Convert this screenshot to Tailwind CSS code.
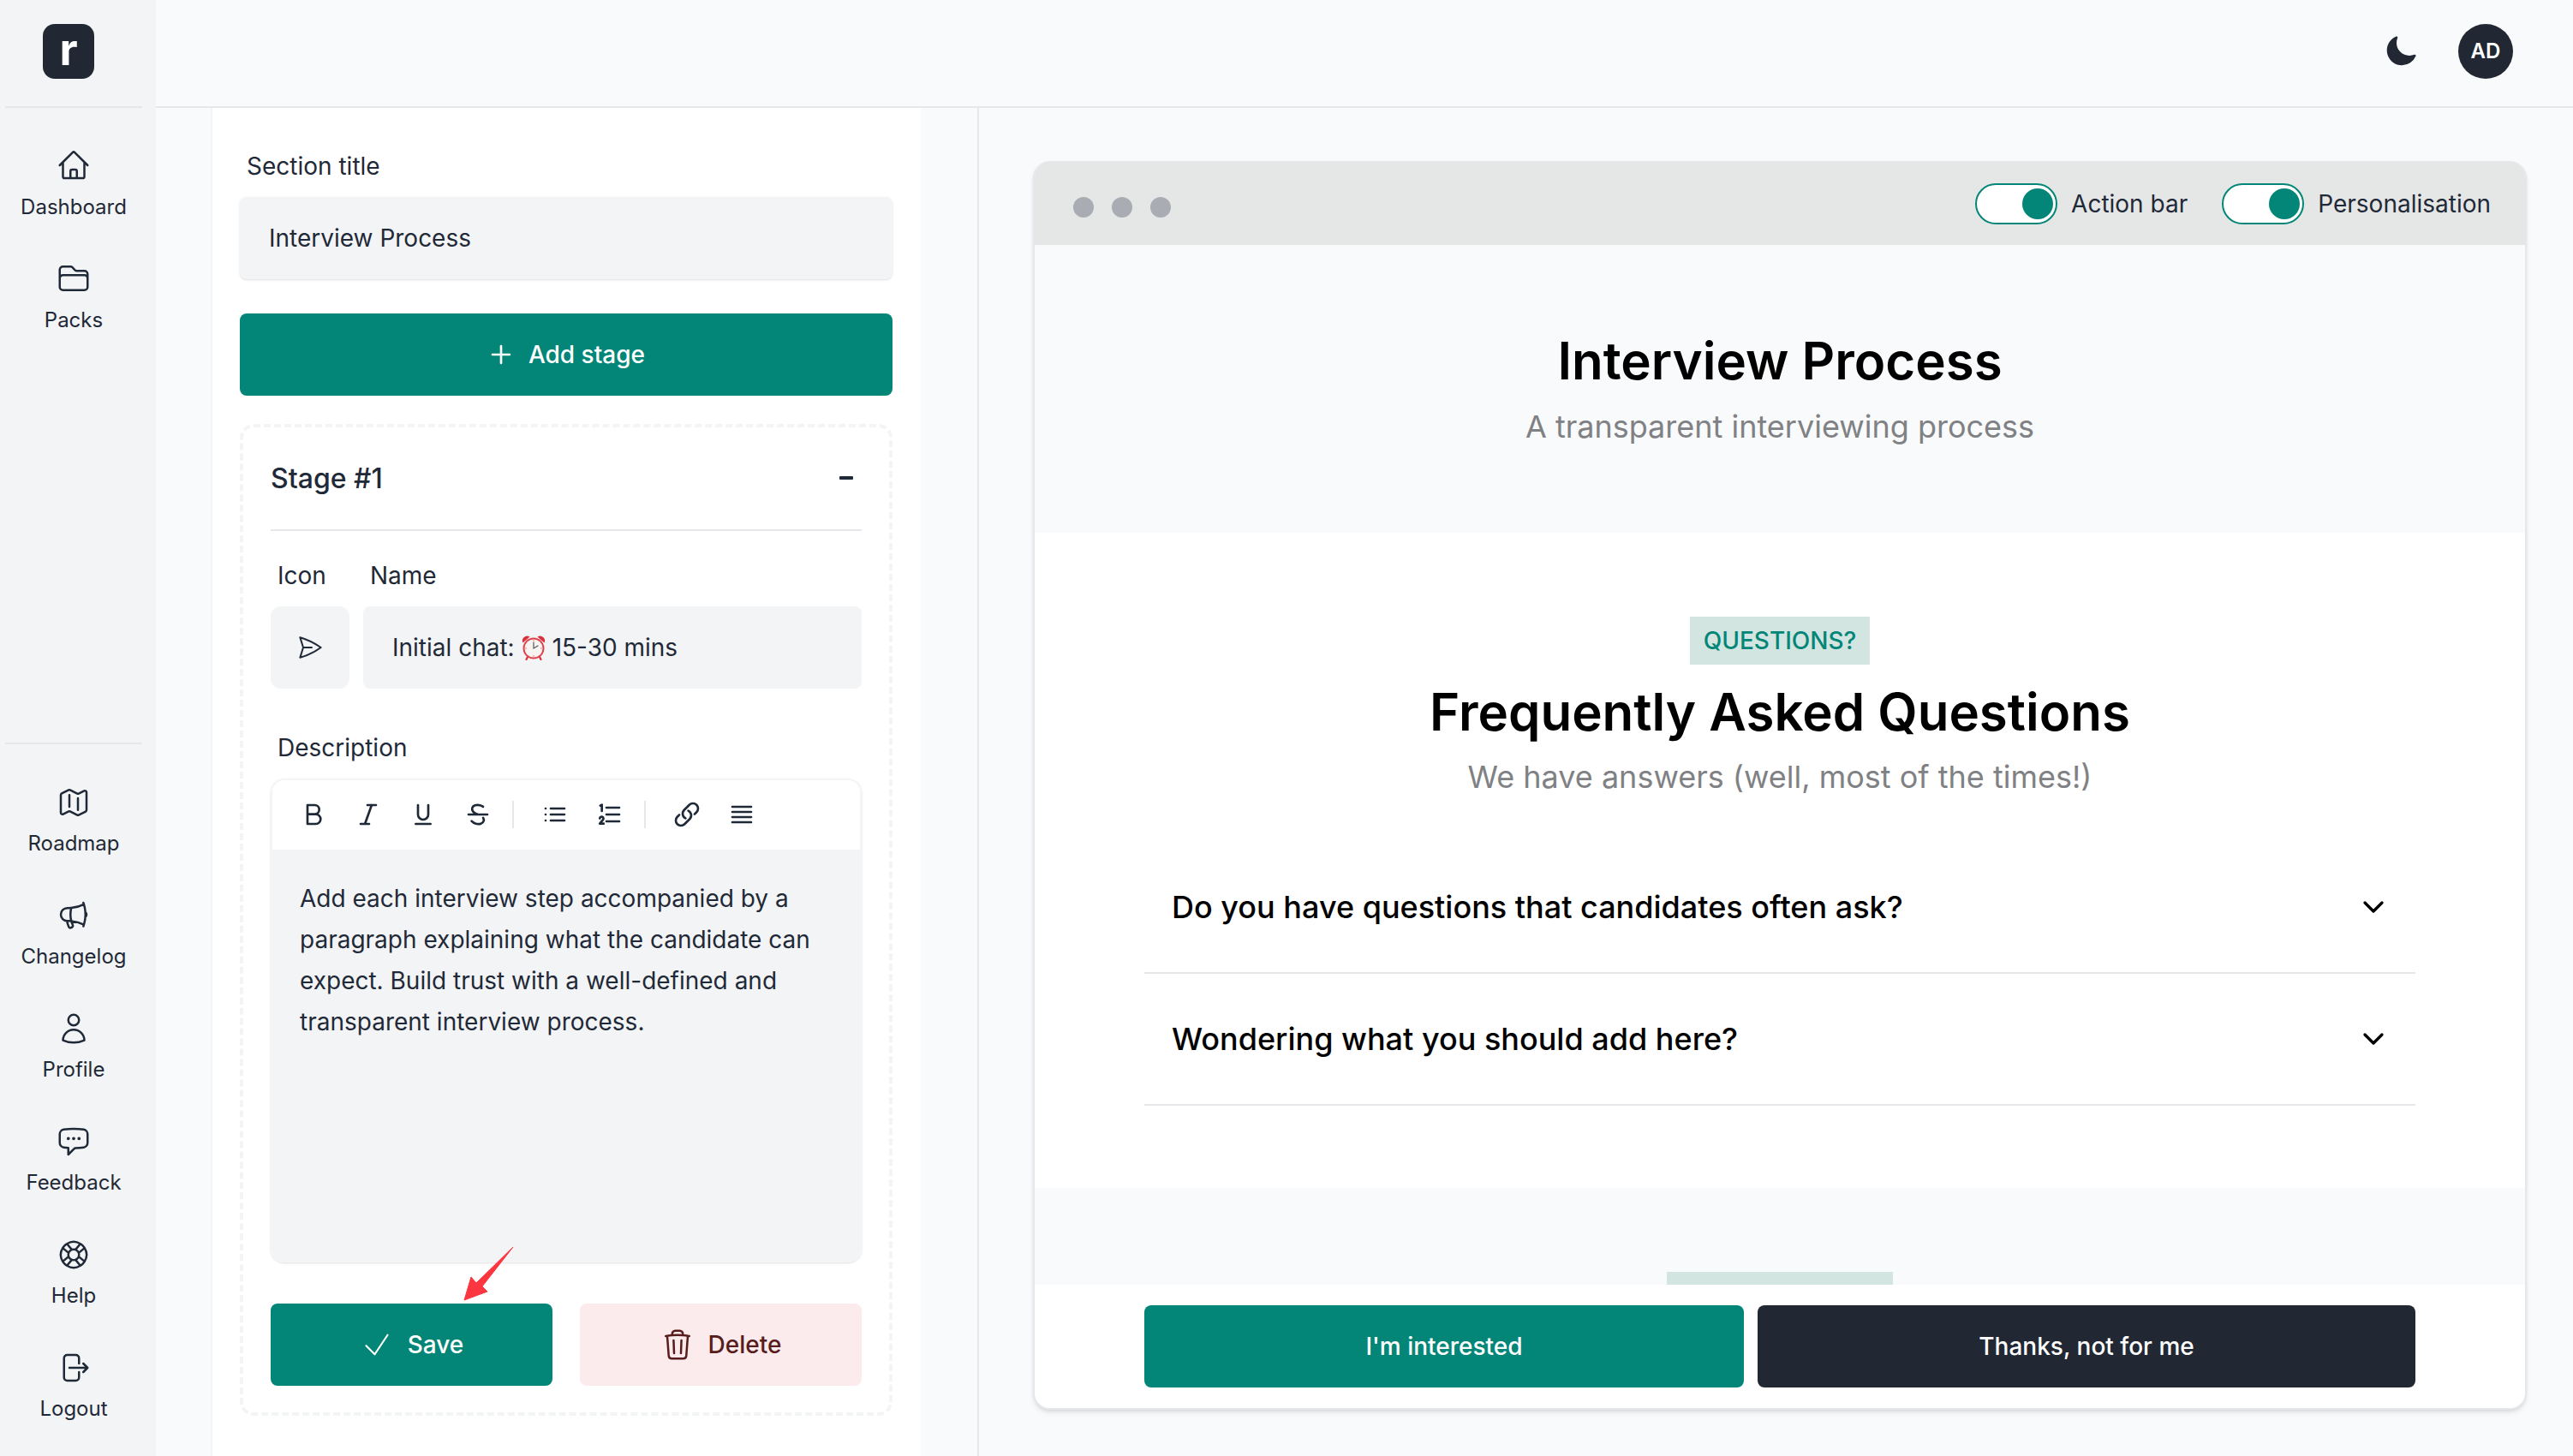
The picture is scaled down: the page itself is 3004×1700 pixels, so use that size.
<!DOCTYPE html>
<html lang="en">
<head>
<meta charset="utf-8">
<title>Interview Process</title>
<script src="https://cdn.jsdelivr.net/npm/@tailwindcss/browser@4"></script>
</head>
<body class="m-0">
<div class="flex w-[3004px] h-[1700px] overflow-hidden bg-[#f9fafb] text-[#1f2937] font-[Inter,sans-serif]">

  <!-- Sidebar -->
  <aside class="w-[182px] h-full shrink-0 flex flex-col bg-[#f3f4f6] pr-[10px] pb-[39px]">
    <div class="h-[124px] pl-[50px] pt-[28px] shrink-0">
      <div class="w-[60px] h-[64px] rounded-[14px] bg-[#212833] flex items-center justify-center text-white font-bold text-[52px] leading-none pb-[5px]">r</div>
    </div>
    <div class="mx-[6px] h-[2px] bg-[#e5e7eb] shrink-0"></div>
    <nav class="flex flex-col gap-[47px] pt-[47px]">
      <a class="flex flex-col items-center gap-[13px]">
        <svg class="w-[40px] h-[40px]" fill="none" viewBox="0 0 24 24" stroke="currentColor" stroke-width="1.5" stroke-linecap="round" stroke-linejoin="round"><path d="M2.25 12l8.954-8.955c.44-.439 1.152-.439 1.591 0L21.75 12M4.5 9.75v10.125c0 .621.504 1.125 1.125 1.125H9.75v-4.875c0-.621.504-1.125 1.125-1.125h2.25c.621 0 1.125.504 1.125 1.125V21h4.125c.621 0 1.125-.504 1.125-1.125V9.75M8.25 21h8.25"/></svg>
        <span class="text-[24px] leading-[32px]">Dashboard</span>
      </a>
      <a class="flex flex-col items-center gap-[13px]">
        <svg class="w-[40px] h-[40px]" fill="none" viewBox="0 0 24 24" stroke="currentColor" stroke-width="1.5" stroke-linecap="round" stroke-linejoin="round"><path d="M2.25 12.75V12A2.25 2.25 0 014.5 9.75h15A2.25 2.25 0 0121.75 12v.75m-8.69-6.44l-2.12-2.12a1.5 1.5 0 00-1.061-.44H4.5A2.25 2.25 0 002.25 6v12a2.25 2.25 0 002.25 2.25h15A2.25 2.25 0 0021.75 18V9a2.25 2.25 0 00-2.25-2.25h-5.379a1.5 1.5 0 01-1.06-.44z"/></svg>
        <span class="text-[24px] leading-[32px]">Packs</span>
      </a>
    </nav>
    <div class="mt-auto mx-[6px] h-[2px] bg-[#e5e7eb] shrink-0"></div>
    <nav class="flex flex-col gap-[48px] pt-[48px]">
      <a class="flex flex-col items-center gap-[12px]">
        <svg class="w-[40px] h-[40px]" fill="none" viewBox="0 0 24 24" stroke="currentColor" stroke-width="1.5" stroke-linecap="round" stroke-linejoin="round"><path d="M9 6.75V15m6-6v8.25m.503 3.498l4.875-2.437c.381-.19.622-.58.622-1.006V4.82c0-.836-.88-1.38-1.628-1.006l-3.869 1.934c-.317.159-.69.159-1.006 0L9.503 3.252a1.125 1.125 0 00-1.006 0L3.622 5.689C3.24 5.88 3 6.27 3 6.695V19.18c0 .836.88 1.38 1.628 1.006l3.869-1.934c.317-.159.69-.159 1.006 0l4.994 2.497c.317.158.69.158 1.006 0z"/></svg>
        <span class="text-[24px] leading-[32px]">Roadmap</span>
      </a>
      <a class="flex flex-col items-center gap-[12px]">
        <svg class="w-[40px] h-[40px]" fill="none" viewBox="0 0 24 24" stroke="currentColor" stroke-width="1.5" stroke-linecap="round" stroke-linejoin="round"><path d="M10.34 15.84c-.688-.06-1.386-.09-2.09-.09H7.5a4.5 4.5 0 110-9h.75c.704 0 1.402-.03 2.09-.09m0 9.18c.253.962.584 1.892.985 2.783.247.55.06 1.21-.463 1.511l-.657.38c-.551.318-1.26.117-1.527-.461a20.845 20.845 0 01-1.44-4.282m3.102.069a18.03 18.03 0 01-.59-4.59c0-1.586.205-3.124.59-4.59m0 9.18a23.848 23.848 0 018.835 2.535M10.34 6.66a23.847 23.847 0 008.835-2.535m0 0A23.74 23.74 0 0018.795 3m.38 1.125a23.91 23.91 0 011.014 5.395m-1.014 8.855c-.118.38-.245.754-.38 1.125m.38-1.125a23.91 23.91 0 001.014-5.395m0-3.46c.495.413.811 1.035.811 1.73 0 .695-.316 1.317-.811 1.73m0-3.46a24.347 24.347 0 010 3.46"/></svg>
        <span class="text-[24px] leading-[32px]">Changelog</span>
      </a>
      <a class="flex flex-col items-center gap-[12px]">
        <svg class="w-[40px] h-[40px]" fill="none" viewBox="0 0 24 24" stroke="currentColor" stroke-width="1.5" stroke-linecap="round" stroke-linejoin="round"><path d="M15.75 6a3.75 3.75 0 11-7.5 0 3.75 3.75 0 017.5 0zM4.501 20.118a7.5 7.5 0 0114.998 0A17.933 17.933 0 0112 21.75c-2.676 0-5.216-.584-7.499-1.632z"/></svg>
        <span class="text-[24px] leading-[32px]">Profile</span>
      </a>
      <a class="flex flex-col items-center gap-[12px]">
        <svg class="w-[40px] h-[40px]" fill="none" viewBox="0 0 24 24" stroke="currentColor" stroke-width="1.5" stroke-linecap="round" stroke-linejoin="round"><path d="M8.625 9.75a.375.375 0 11-.75 0 .375.375 0 01.75 0zm0 0H8.25m4.125 0a.375.375 0 11-.75 0 .375.375 0 01.75 0zm0 0H12m4.125 0a.375.375 0 11-.75 0 .375.375 0 01.75 0zm0 0h-.375m-13.5 3.01c0 1.6 1.123 2.994 2.707 3.227 1.087.16 2.185.283 3.293.369V21l4.184-4.183a1.14 1.14 0 01.778-.332 48.294 48.294 0 005.83-.498c1.585-.233 2.708-1.626 2.708-3.228V6.741c0-1.602-1.123-2.995-2.707-3.228A48.394 48.394 0 0012 3c-2.392 0-4.744.175-7.043.513C3.373 3.746 2.25 5.14 2.25 6.741v6.018z"/></svg>
        <span class="text-[24px] leading-[32px]">Feedback</span>
      </a>
      <a class="flex flex-col items-center gap-[12px]">
        <svg class="w-[40px] h-[40px]" fill="none" viewBox="0 0 24 24" stroke="currentColor" stroke-width="1.5" stroke-linecap="round" stroke-linejoin="round"><path d="M16.712 4.33a9.027 9.027 0 011.652 1.306c.51.51.944 1.064 1.306 1.652M16.712 4.33l-3.448 4.138m3.448-4.138a9.014 9.014 0 00-9.424 0M19.67 7.288l-4.138 3.448m4.138-3.448a9.014 9.014 0 010 9.424m-4.138-5.976a3.736 3.736 0 00-.88-1.388 3.737 3.737 0 00-1.388-.88m2.268 2.268a3.765 3.765 0 010 2.528m-2.268-4.796a3.765 3.765 0 00-2.528 0m4.796 4.796c-.181.506-.475.982-.88 1.388a3.736 3.736 0 01-1.388.88m2.268-2.268l4.138 3.448m0 0a9.027 9.027 0 01-1.306 1.652c-.51.51-1.064.944-1.652 1.306m0 0l-3.448-4.138m3.448 4.138a9.014 9.014 0 01-9.424 0m5.976-4.138a3.765 3.765 0 01-2.528 0m0 0a3.736 3.736 0 01-1.388-.88 3.737 3.737 0 01-.88-1.388m2.268 2.268L7.288 19.67m0 0a9.024 9.024 0 01-1.652-1.306 9.027 9.027 0 01-1.306-1.652m0 0l4.138-3.448M4.33 16.712a9.014 9.014 0 010-9.424m4.138 5.976a3.765 3.765 0 010-2.528m0 0c.181-.506.475-.982.88-1.388a3.736 3.736 0 011.388-.88m-2.268 2.268L4.33 7.288m6.406 1.18L7.288 4.33m0 0a9.024 9.024 0 00-1.652 1.306A9.025 9.025 0 004.33 7.288"/></svg>
        <span class="text-[24px] leading-[32px]">Help</span>
      </a>
      <a class="flex flex-col items-center gap-[12px]">
        <svg class="w-[40px] h-[40px]" fill="none" viewBox="0 0 24 24" stroke="currentColor" stroke-width="1.5" stroke-linecap="round" stroke-linejoin="round"><path d="M15.75 9V5.25A2.25 2.25 0 0013.5 3h-6a2.25 2.25 0 00-2.25 2.25v13.5A2.25 2.25 0 007.5 21h6a2.25 2.25 0 002.25-2.25V15m3 0l3-3m0 0l-3-3m3 3H9"/></svg>
        <span class="text-[24px] leading-[32px]">Logout</span>
      </a>
    </nav>
  </aside>

  <div class="flex-1 min-w-0 flex flex-col">
    <!-- Top bar -->
    <header class="h-[126px] shrink-0 border-b-2 border-[#e5e7eb] flex items-center justify-end pr-[70px] pb-[4px] gap-[47px]">
      <svg class="w-[40px] h-[40px]" viewBox="0 0 24 24" fill="#212833"><path fill-rule="evenodd" d="M9.528 1.718a.75.75 0 01.162.819A8.97 8.97 0 009 6a9 9 0 009 9 8.97 8.97 0 003.463-.69.75.75 0 01.981.98 10.503 10.503 0 01-9.694 6.46c-5.799 0-10.5-4.701-10.5-10.5 0-4.368 2.667-8.112 6.46-9.694a.75.75 0 01.818.162z" clip-rule="evenodd"/></svg>
      <div class="w-[64px] h-[64px] rounded-full bg-[#212833] text-white text-[24px] font-semibold flex items-center justify-center">AD</div>
    </header>

    <div class="flex-1 min-h-0 flex">
      <div class="w-[64px] shrink-0"></div>

      <!-- Editor panel -->
      <section class="w-[829px] shrink-0 bg-white border-l-2 border-[#f3f4f6] pl-[32px] pr-[33px] pt-[48px]">
        <label class="block pl-[8px] text-[28px] leading-[40px]">Section title</label>
        <div class="mt-[16px] h-[96px] rounded-[8px] bg-[#f3f4f6] shadow-sm flex items-center px-[34px] text-[28px]">Interview Process</div>
        <button class="mt-[40px] w-full h-[96px] rounded-[8px] bg-[#038677] text-white text-[28px] font-medium flex items-center justify-center gap-[16px]">
          <svg class="w-[32px] h-[32px]" fill="none" viewBox="0 0 24 24" stroke="currentColor" stroke-width="2" stroke-linecap="round" stroke-linejoin="round"><path d="M12 4.5v15m7.5-7.5h-15"/></svg>
          Add stage
        </button>

        <div class="mt-[33px] border-4 border-dashed border-[#f3f4f6] rounded-[16px] px-[32px] pb-[31px]">
          <div class="h-[121px] border-b-2 border-[#e5e7eb] flex items-center justify-between pr-[10px]">
            <span class="text-[32px] font-medium">Stage #1</span>
            <span class="block w-[16px] h-[4px] rounded-[1px] bg-[#1f2937] mb-[2px]"></span>
          </div>

          <div class="mt-[32px] flex gap-[16px]">
            <div class="w-[92px] shrink-0">
              <div class="pl-[8px] text-[28px] leading-[40px]">Icon</div>
              <div class="mt-[16px] h-[96px] rounded-[12px] bg-[#f3f4f6] flex items-center justify-center">
                <svg class="w-[32px] h-[32px]" fill="none" viewBox="0 0 24 24" stroke="currentColor" stroke-width="1.5" stroke-linecap="round" stroke-linejoin="round"><path d="M6 12L3.269 3.126A59.768 59.768 0 0121.485 12 59.77 59.77 0 013.27 20.876L5.999 12zm0 0h7.5"/></svg>
              </div>
            </div>
            <div class="flex-1 min-w-0">
              <div class="pl-[8px] text-[28px] leading-[40px]">Name</div>
              <div class="mt-[16px] h-[96px] rounded-[8px] bg-[#f3f4f6] flex items-center pl-[34px] text-[28px]">
                <span>Initial chat:</span>
                <svg class="w-[30px] h-[30px] mx-[7px]" viewBox="0 0 30 30" role="img" aria-label="alarm clock">
                  <path d="M2.5 9.5 A5.5 5.5 0 0 1 10.5 2.5 Z" fill="#d8323c"/>
                  <path d="M27.5 9.5 A5.5 5.5 0 0 0 19.5 2.5 Z" fill="#d8323c"/>
                  <path d="M8 26 L6.5 29 M22 26 L23.5 29" stroke="#d8323c" stroke-width="2.2" stroke-linecap="round"/>
                  <circle cx="15" cy="16" r="12.5" fill="#e0444c"/>
                  <circle cx="15" cy="16" r="10.5" fill="#f7f3f1"/>
                  <path d="M15 9 V16 L20 13" fill="none" stroke="#55565a" stroke-width="1.2" stroke-linecap="round"/>
                  <path d="M15 6.5v1.2M15 24.3v1.2M5.5 16h1.2M23.3 16h1.2" stroke="#d8323c" stroke-width="1"/>
                </svg>
                <span>15-30 mins</span>
              </div>
            </div>
          </div>

          <div class="mt-[49px] pl-[8px] text-[28px] leading-[40px]">Description</div>
          <div class="mt-[16px] rounded-[16px] border-2 border-b-0 border-[#f3f4f6] overflow-hidden shadow-sm">
            <div class="h-[81px] bg-white flex items-center pl-[32px] gap-[32px] pb-[1px]">
              <svg class="w-[32px] h-[32px]" fill="none" viewBox="0 0 24 24" stroke="currentColor" stroke-width="2" stroke-linecap="round" stroke-linejoin="round"><path d="M6.75 3.75H13a4 4 0 0 1 0 8H6.75zM6.75 11.75H14a4.25 4.25 0 0 1 0 8.5H6.75z"/></svg>
              <svg class="w-[32px] h-[32px]" fill="none" viewBox="0 0 24 24" stroke="currentColor" stroke-width="2" stroke-linecap="round" stroke-linejoin="round"><path d="M5.248 20.246H9.05m0 0h3.696m-3.696 0 5.893-16.502m0 0h-3.697m3.697 0h3.803"/></svg>
              <svg class="w-[32px] h-[32px]" fill="none" viewBox="0 0 24 24" stroke="currentColor" stroke-width="2" stroke-linecap="round" stroke-linejoin="round"><path d="M7.5 3.75v8.25a4.5 4.5 0 0 0 9 0V3.75M5.5 20.25h13"/></svg>
              <svg class="w-[32px] h-[32px]" fill="none" viewBox="0 0 24 24" stroke="currentColor" stroke-width="2" stroke-linecap="round" stroke-linejoin="round"><path d="M12 12a8.912 8.912 0 0 1-.318-.079c-1.585-.424-2.904-1.247-3.76-2.236-.873-1.009-1.265-2.19-.968-3.301.59-2.2 3.663-3.29 6.863-2.432A8.186 8.186 0 0 1 16.5 5.21M6.42 17.81c.857.99 2.176 1.812 3.761 2.237 3.2.858 6.274-.23 6.863-2.431.233-.868.044-1.779-.465-2.617M3.75 12h16.5"/></svg>
              <span class="-ml-[8px] block w-[2px] h-[32px] bg-[#e5e7eb]"></span>
              <svg class="w-[32px] h-[32px]" fill="none" viewBox="0 0 24 24" stroke="currentColor" stroke-width="2" stroke-linecap="round" stroke-linejoin="round"><path d="M8.25 6.75h12M8.25 12h12m-12 5.25h12M3.75 6.75h.01M3.75 12h.01M3.75 17.25h.01"/></svg>
              <svg class="w-[32px] h-[32px]" fill="none" viewBox="0 0 24 24" stroke="currentColor" stroke-width="2" stroke-linecap="round" stroke-linejoin="round"><path d="M9 6h11.25M9 12h11.25M9 18h11.25M3.6 4.2 L5 3.4 V9 M3.2 15.4a1.6 1.6 0 1 1 2.8 1.2L3.2 20h3.4"/></svg>
              <span class="-ml-[8px] block w-[2px] h-[32px] bg-[#e5e7eb]"></span>
              <svg class="w-[32px] h-[32px]" fill="none" viewBox="0 0 24 24" stroke="currentColor" stroke-width="2" stroke-linecap="round" stroke-linejoin="round"><path d="M13.19 8.688a4.5 4.5 0 011.242 7.244l-4.5 4.5a4.5 4.5 0 01-6.364-6.364l1.757-1.757m13.35-.622l1.757-1.757a4.5 4.5 0 00-6.364-6.364l-4.5 4.5a4.5 4.5 0 001.242 7.244"/></svg>
              <svg class="w-[32px] h-[32px]" fill="none" viewBox="0 0 24 24" stroke="currentColor" stroke-width="2" stroke-linecap="round" stroke-linejoin="round"><path d="M3.75 5.25h16.5m-16.5 4.5h16.5m-16.5 4.5h16.5m-16.5 4.5h16.5"/></svg>
            </div>
            <div class="h-[482px] bg-[#f3f4f6] pl-[32px] pr-[40px] pt-[33px] text-[28px] leading-[48px]">Add each interview step accompanied by a paragraph explaining what the candidate can expect. Build trust with a well-defined and transparent interview process.</div>
          </div>

          <div class="relative mt-[48px] flex gap-[32px]">
            <button class="flex-1 h-[96px] rounded-[8px] bg-[#038677] text-white text-[28px] font-medium flex items-center justify-center gap-[16px]">
              <svg class="w-[40px] h-[40px]" fill="none" viewBox="0 0 24 24" stroke="currentColor" stroke-width="1.3" stroke-linecap="round" stroke-linejoin="round"><path d="M4.5 12.75l6 6 9-13.5"/></svg>
              Save
            </button>
            <button class="flex-1 h-[96px] rounded-[8px] bg-[#fcebec] text-[#571c1c] text-[28px] font-medium flex items-center justify-center gap-[16px]">
              <svg class="w-[40px] h-[40px]" fill="none" viewBox="0 0 24 24" stroke="currentColor" stroke-width="1.5" stroke-linecap="round" stroke-linejoin="round"><path d="M14.74 9l-.346 9m-4.788 0L9.26 9m9.968-3.21c.342.052.682.107 1.022.166m-1.022-.165L18.16 19.673a2.25 2.25 0 01-2.244 2.077H8.084a2.25 2.25 0 01-2.244-2.077L4.772 5.79m14.456 0a48.108 48.108 0 00-3.478-.397m-12 .562c.34-.059.68-.114 1.022-.165m0 0a48.11 48.11 0 013.478-.397m7.5 0v-.916c0-1.18-.91-2.164-2.09-2.201a51.964 51.964 0 00-3.32 0c-1.18.037-2.09 1.022-2.09 2.201v.916m7.5 0a48.667 48.667 0 00-7.5 0"/></svg>
              Delete
            </button>
            <svg class="absolute left-[219px] top-[-72px] w-[70px] h-[75px]" viewBox="0 0 70 75"><polygon points="64,6 28,52 34,58 7,68 15,41 21,48" fill="#fb3640" stroke="#fb3640" stroke-width="1" stroke-linejoin="round"/></svg>
          </div>
        </div>
      </section>

      <div class="w-[66px] shrink-0"></div>

      <!-- Preview panel -->
      <section class="flex-1 min-w-0 border-l-2 border-[#e5e7eb] pl-[63px] pr-[54px] pt-[62px]">
        <div class="h-[1458px] rounded-[20px] border-2 border-t-0 border-[#e5e7eb] shadow-md flex flex-col overflow-hidden bg-white">
          <div class="-mx-[2px] h-[98px] shrink-0 bg-[#e5e7e6] flex items-center pl-[47px] pr-[42px]">
            <div class="flex gap-[21px] mt-[9px]">
              <span class="block w-[24px] h-[24px] rounded-full bg-[#a9acb3]"></span>
              <span class="block w-[24px] h-[24px] rounded-full bg-[#a9acb3]"></span>
              <span class="block w-[24px] h-[24px] rounded-full bg-[#a9acb3]"></span>
            </div>
            <div class="ml-auto flex items-center gap-[40px] text-[28px] mt-[2px]">
              <div class="flex items-center gap-[16px]">
                <span class="w-[96px] h-[48px] rounded-full border-2 border-[#038677] bg-white flex items-center justify-end pr-[3px]"><span class="block w-[36px] h-[36px] rounded-full bg-[#038677]"></span></span>
                <span>Action bar</span>
              </div>
              <div class="flex items-center gap-[16px]">
                <span class="w-[96px] h-[48px] rounded-full border-2 border-[#038677] bg-white flex items-center justify-end pr-[3px]"><span class="block w-[36px] h-[36px] rounded-full bg-[#038677]"></span></span>
                <span>Personalisation</span>
              </div>
            </div>
          </div>

          <div class="h-[336px] shrink-0 bg-[#f9fafb] flex flex-col items-center pt-[99px]">
            <h1 class="text-[60px] leading-[72px] font-semibold text-black">Interview Process</h1>
            <p class="mt-[13px] text-[36px] leading-[56px] text-[#7f8184]">A transparent interviewing process</p>
          </div>

          <div class="h-[765px] shrink-0 bg-white flex flex-col items-center pt-[98px]">
            <span class="w-[210px] h-[56px] bg-[#d2e5e1] text-[#038677] text-[28px] font-medium flex items-center justify-center">QUESTIONS?</span>
            <h2 class="mt-[19px] text-[60px] leading-[72px] font-semibold text-black">Frequently Asked Questions</h2>
            <p class="mt-[12px] text-[36px] leading-[56px] text-[#7f8184]">We have answers (well, most of the times!)</p>
            <div class="mt-[48px] w-[1484px] text-black">
              <div class="h-[154px] border-b-2 border-[#e5e7eb] flex items-center justify-between pl-[32px] pr-[33px]">
                <span class="text-[36px] font-medium">Do you have questions that candidates often ask?</span>
                <svg class="w-[32px] h-[32px]" fill="none" viewBox="0 0 24 24" stroke="currentColor" stroke-width="2.5" stroke-linecap="round" stroke-linejoin="round"><path d="M19.5 8.25l-7.5 7.5-7.5-7.5"/></svg>
              </div>
              <div class="h-[154px] border-b-2 border-[#e5e7eb] flex items-center justify-between pl-[32px] pr-[33px]">
                <span class="text-[36px] font-medium">Wondering what you should add here?</span>
                <svg class="w-[32px] h-[32px]" fill="none" viewBox="0 0 24 24" stroke="currentColor" stroke-width="2.5" stroke-linecap="round" stroke-linejoin="round"><path d="M19.5 8.25l-7.5 7.5-7.5-7.5"/></svg>
              </div>
            </div>
          </div>

          <div class="h-[113px] shrink-0 bg-[#f9fafb] flex justify-center items-end">
            <span class="block w-[264px] h-[15px] bg-[#d2e5e1]"></span>
          </div>

          <div class="flex-1 min-h-0 bg-white flex gap-[16px] px-[128px] pt-[24px]">
            <button class="w-[700px] h-[96px] rounded-[8px] bg-[#038677] text-white text-[28px] font-medium">I'm interested</button>
            <button class="flex-1 h-[96px] rounded-[8px] bg-[#212833] text-white text-[28px] font-medium">Thanks, not for me</button>
          </div>
        </div>
      </section>
    </div>
  </div>
</div>
</body>
</html>
